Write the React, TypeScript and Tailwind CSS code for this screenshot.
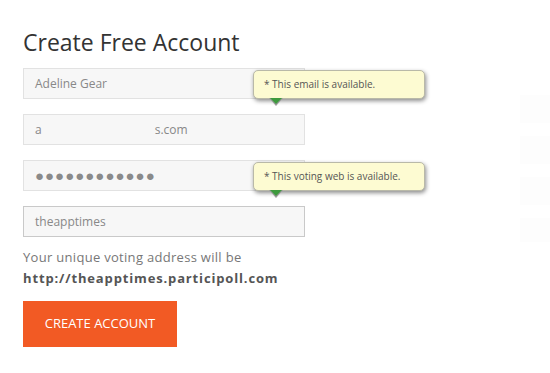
import React from 'react';

const Tip: React.FC<{ text: string }> = ({ text }) => (
  <div className="absolute left-[230px] top-[2px] z-10">
    <div className="relative h-[29px] w-[172px] rounded-[5px] border border-[#b9b9a8] bg-[#fdfbd2] pl-[10px] text-[10px] leading-[27px] text-[#555] shadow-[1px_2px_4px_rgba(0,0,0,0.45)]">
      {text}
      <span className="absolute left-[15px] top-[27px] h-0 w-0 border-x-[7px] border-t-[8px] border-x-transparent border-t-[#9a9a9a]" />
      <span className="absolute left-[16px] top-[27px] h-0 w-0 border-x-[6px] border-t-[6px] border-x-transparent border-t-[#3e9a3e]" />
    </div>
  </div>
);

const Field: React.FC<{ children: React.ReactNode; dark?: boolean; tip?: string }> = ({ children, dark, tip }) => (
  <div className="relative h-[31px] w-[282px]">
    <div
      className={`flex h-full items-center border bg-[#f7f7f7] pl-[11px] text-[12px] text-[#888] ${
        dark ? 'border-[#c9c9c9]' : 'border-[#e2e2e2]'
      }`}
    >
      {children}
    </div>
    {tip && <Tip text={tip} />}
  </div>
);

const App: React.FC = () => {
  return (
    <div className="relative h-[373px] w-[550px] overflow-hidden bg-white font-['Open_Sans',sans-serif]">
      <div className="flex flex-col pl-[23px] pt-[27px]">
        <h1 className="text-[23px] leading-[30px] text-[#333]">Create Free Account</h1>
        <div className="mt-[11px] flex flex-col gap-[15px]">
          <Field tip="* This email is available.">Adeline Gear</Field>
          <Field>
            <span>a</span>
            <span className="w-[113px]" />
            <span>s.com</span>
          </Field>
          <Field tip="* This voting web is available.">
            <span className="text-[15px] tracking-[1px] text-[#8a8a8a]">●●●●●●●●●●●●</span>
          </Field>
          <Field dark>theapptimes</Field>
        </div>
        <p className="mt-[10px] text-[13px] leading-[20px] tracking-[0.3px] text-[#777]">Your unique voting address will be</p>
        <p className="mt-[1px] text-[13px] font-bold leading-[20px] tracking-[0.85px] text-[#555]">
          http://theapptimes.participoll.com
        </p>
        <button className="mt-[13px] flex h-[46px] w-[154px] items-center justify-center bg-[#f25a24] text-[13px] text-white">
          CREATE ACCOUNT
        </button>
      </div>
      <div className="absolute right-0 top-[95px] flex flex-col gap-[13px]">
        <div className="h-[28px] w-[30px] bg-[#fdfdfd]" />
        <div className="h-[28px] w-[30px] bg-[#fdfdfd]" />
        <div className="h-[28px] w-[30px] bg-[#fdfdfd]" />
        <div className="h-[24px] w-[30px] bg-[#fdfdfd]" />
      </div>
    </div>
  );
};

export default App;
